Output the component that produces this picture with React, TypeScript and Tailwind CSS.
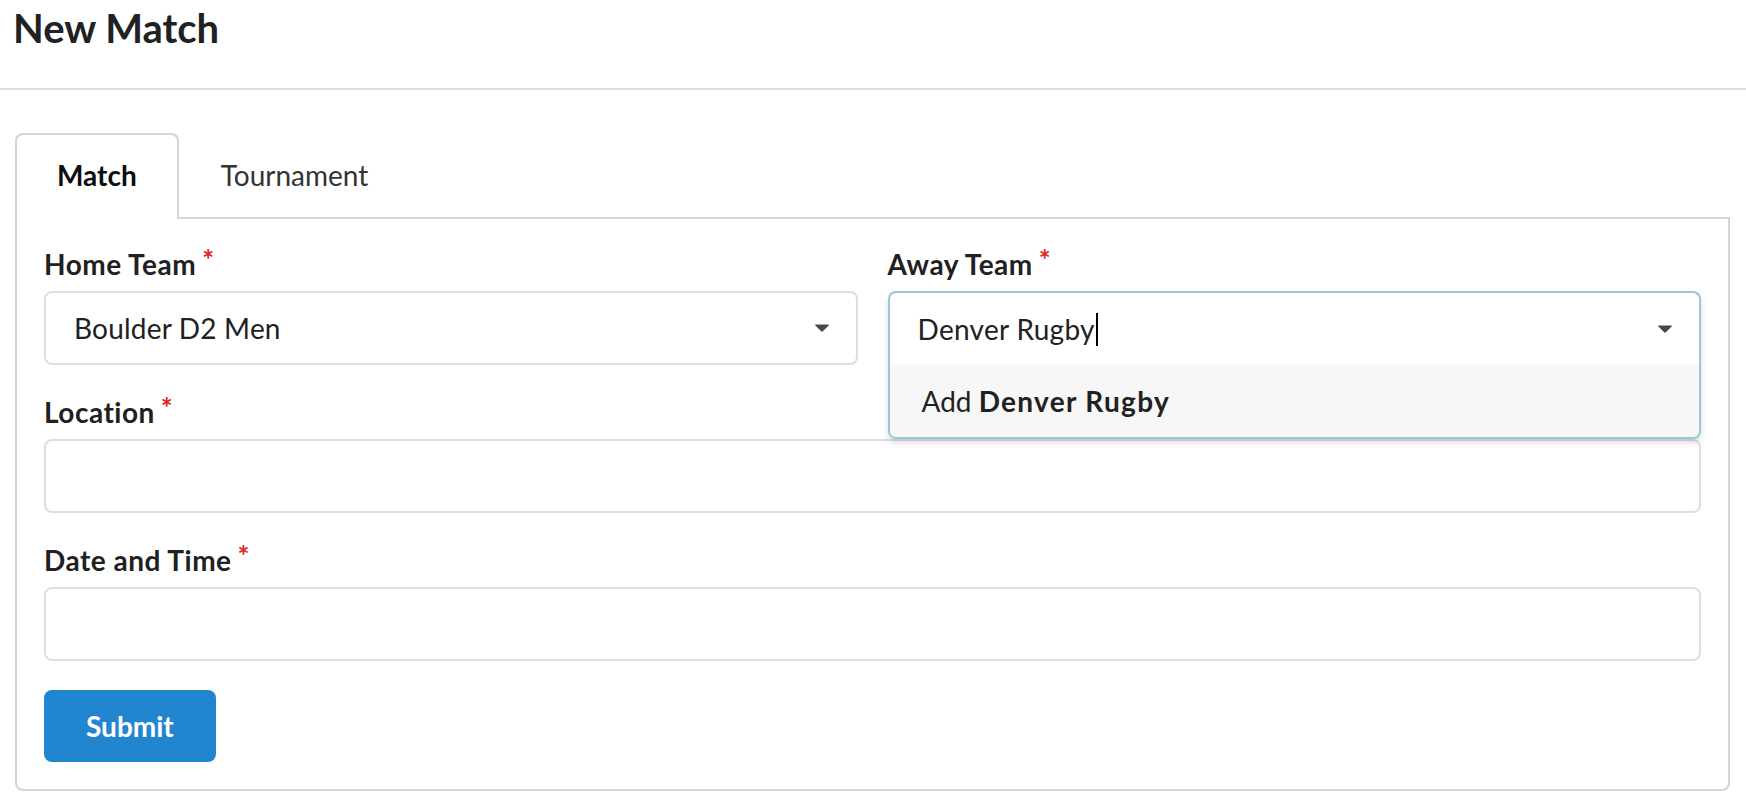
import type { ReactNode } from 'react';

function Caret() {
  return (
    <svg width="14" height="8" viewBox="0 0 14 8" className="shrink-0">
      <path d="M0.8 0.4h12.4c0.6 0 0.9 0.7 0.5 1.1L7.5 7.4c-0.3 0.3-0.7 0.3-1 0L0.3 1.5C-0.1 1.1 0.2 0.4 0.8 0.4z" fill="#474747" />
    </svg>
  );
}

function Label({ children }: { children: ReactNode }) {
  return (
    <label className="block text-[28px] leading-[37px] font-bold text-[#212121] mb-[8px]">
      <span className="tracking-[0.5px]">{children}</span>
      <span className="relative -top-[5px] ml-[6px] text-[#db2828]">*</span>
    </label>
  );
}

function TextInput() {
  return <div className="h-[74px] border-2 border-[#dedede] rounded-[8px] bg-white" />;
}

export default function App() {
  return (
    <div className="min-h-screen bg-white font-['Lato',sans-serif] text-[#212121] antialiased">
      <div className="h-[90px] border-b-2 border-[#dedede] pt-[4px] pl-[13px]">
        <h1 className="text-[40px] leading-[48px] font-bold text-[#212121]">New Match</h1>
      </div>

      <div className="pt-[43px] pl-[15px] pr-[16px]">
        <div className="flex border-b-2 border-[#d4d4d5]">
          <div className="-mb-[2px] bg-white border-2 border-b-0 border-[#d4d4d5] rounded-t-[8px] px-[40px] pt-[26px] pb-[30px] text-[28px] leading-[28px] font-bold text-[#0d0d0d]">
            Match
          </div>
          <div className="-mb-[2px] border-2 border-b-0 border-transparent px-[40px] pt-[26px] pb-[30px] text-[28px] leading-[28px] text-[#333333]">
            Tournament
          </div>
        </div>

        <div className="border-2 border-t-0 border-[#d4d4d5] rounded-b-[8px] px-[27px] pt-[27px] pb-[27px]">
          <div className="grid grid-cols-2 gap-[30px] mb-[29px]">
            <div>
              <Label>Home Team</Label>
              <div className="h-[74px] border-2 border-[#dedede] rounded-[8px] flex items-center pl-[28px] pr-[27px]">
                <span className="flex-1 text-[28px] leading-[28px] tracking-[0.2px]">Boulder D2 Men</span>
                <Caret />
              </div>
            </div>
            <div>
              <Label>Away Team</Label>
              <div className="relative z-10">
                <div className="h-[74px] border-2 border-b-0 border-[#96c8da] rounded-t-[8px] flex items-center pl-[28px] pr-[27px] bg-white shadow-[0_4px_6px_0_rgba(34,36,38,0.15)]">
                  <span className="flex-1 flex items-center text-[28px] leading-[28px] tracking-[0.3px]">
                    Denver Rugby
                    <span className="inline-block w-[2px] h-[33px] bg-black ml-[1px]" />
                  </span>
                  <Caret />
                </div>
                <div className="absolute top-full left-0 right-0 border-2 border-t-0 border-[#96c8da] rounded-b-[8px] bg-white overflow-hidden shadow-[0_4px_6px_0_rgba(34,36,38,0.15)]">
                  <div className="h-[72px] bg-[#f7f7f7] flex items-center px-[32px] text-[28px] leading-[28px]">
                    Add&nbsp;<b className="font-bold tracking-[1.3px]">Denver Rugby</b>
                  </div>
                </div>
              </div>
            </div>
          </div>

          <div className="mb-[29px]">
            <Label>Location</Label>
            <TextInput />
          </div>

          <div className="mb-[29px]">
            <Label>Date and Time</Label>
            <TextInput />
          </div>

          <button className="h-[72px] px-[42px] rounded-[8px] bg-[#2185d0] text-white text-[28px] leading-[28px] font-bold">
            Submit
          </button>
        </div>
      </div>
    </div>
  );
}
